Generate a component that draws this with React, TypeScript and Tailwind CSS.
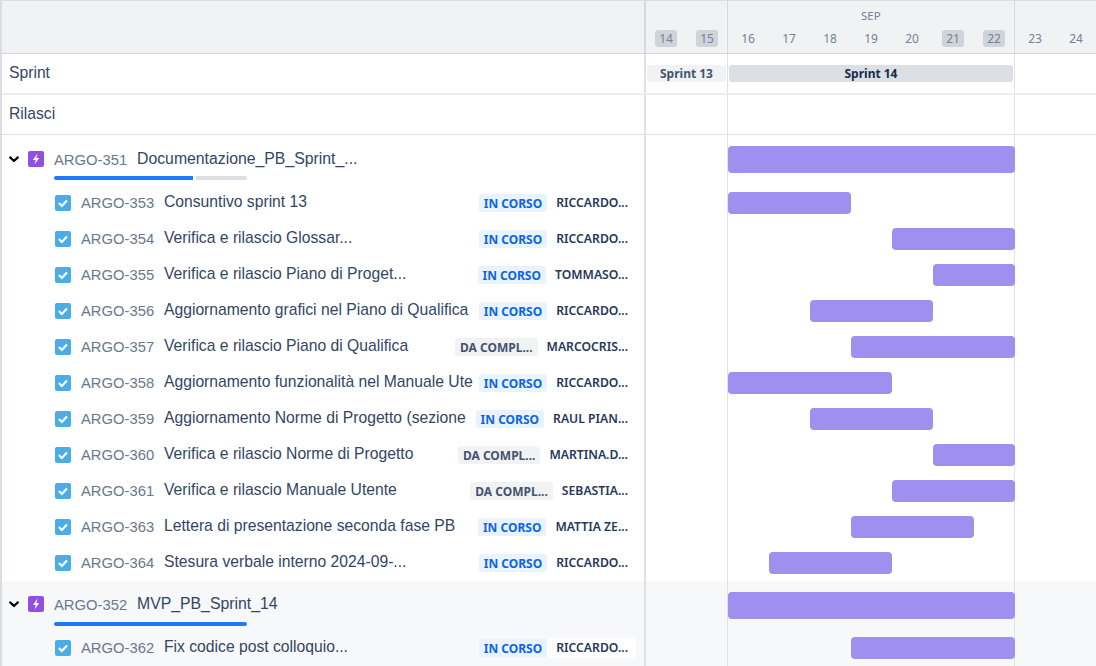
const DAYS = [
  { n: 14, off: true },
  { n: 15, off: true },
  { n: 16 },
  { n: 17 },
  { n: 18 },
  { n: 19 },
  { n: 20 },
  { n: 21, off: true },
  { n: 22, off: true },
  { n: 23 },
  { n: 24 },
];

const DAY_WIDTH = 41;

interface Issue {
  id: string;
  name: string;
  status: "IN CORSO" | "DA COMPL...";
  user: string;
  start: number;
  days: number;
}

const ISSUES: Issue[] = [
  { id: "ARGO-353", name: "Consuntivo sprint 13", status: "IN CORSO", user: "RICCARDO...", start: 0, days: 3 },
  { id: "ARGO-354", name: "Verifica e rilascio Glossar...", status: "IN CORSO", user: "RICCARDO...", start: 4, days: 3 },
  { id: "ARGO-355", name: "Verifica e rilascio Piano di Proget...", status: "IN CORSO", user: "TOMMASO...", start: 5, days: 2 },
  { id: "ARGO-356", name: "Aggiornamento grafici nel Piano di Qualifica", status: "IN CORSO", user: "RICCARDO...", start: 2, days: 3 },
  { id: "ARGO-357", name: "Verifica e rilascio Piano di Qualifica", status: "DA COMPL...", user: "MARCOCRIS...", start: 3, days: 4 },
  { id: "ARGO-358", name: "Aggiornamento funzionalità nel Manuale Ute", status: "IN CORSO", user: "RICCARDO...", start: 0, days: 4 },
  { id: "ARGO-359", name: "Aggiornamento Norme di Progetto (sezione", status: "IN CORSO", user: "RAUL PIAN...", start: 2, days: 3 },
  { id: "ARGO-360", name: "Verifica e rilascio Norme di Progetto", status: "DA COMPL...", user: "MARTINA.D...", start: 5, days: 2 },
  { id: "ARGO-361", name: "Verifica e rilascio Manuale Utente", status: "DA COMPL...", user: "SEBASTIA...", start: 4, days: 3 },
  { id: "ARGO-363", name: "Lettera di presentazione seconda fase PB", status: "IN CORSO", user: "MATTIA ZE...", start: 3, days: 3 },
  { id: "ARGO-364", name: "Stesura verbale interno 2024-09-...", status: "IN CORSO", user: "RICCARDO...", start: 1, days: 3 },
];

function EpicIcon() {
  return (
    <svg width="16" height="16" viewBox="0 0 16 16" className="shrink-0">
      <rect width="16" height="16" rx="2" fill="#904EE2" />
      <path d="M9.6 2.6 4.9 9h2.8l-1.1 4.4L11.3 7H8.5z" fill="#fff" />
    </svg>
  );
}

function TaskIcon() {
  return (
    <svg width="16" height="16" viewBox="0 0 16 16" className="mb-[1px] shrink-0">
      <rect width="16" height="16" rx="2" fill="#4BADE8" />
      <path d="M3.9 8.1 6.8 10.9 12 5.6" fill="none" stroke="#fff" strokeWidth="2.1" />
    </svg>
  );
}

function Chevron() {
  return (
    <svg width="10" height="7" viewBox="0 0 10 7" className="shrink-0">
      <path d="M1.2 1.4 5 5l3.8-3.6" fill="none" stroke="#000" strokeWidth="2.2" strokeLinecap="round" strokeLinejoin="round" />
    </svg>
  );
}

function Bar({ start, days, tall }: { start: number; days: number; tall?: boolean }) {
  return (
    <div
      className={`relative z-10 shrink-0 rounded-[4px] bg-[#9F8FEF] ${tall ? "h-[27px]" : "h-[22px]"}`}
      style={{ marginLeft: start * DAY_WIDTH, width: days * DAY_WIDTH }}
    />
  );
}

// right side of each row, week lines come from the cell borders
function Track({ children, className = "items-center" }: { children?: React.ReactNode; className?: string }) {
  return (
    <div className="flex h-full flex-1 border-l-2 border-[#DFE1E6]">
      <div className="h-full w-[82px] shrink-0 border-r border-[#DFE1E6]" />
      <div className={`flex h-full w-[286px] shrink-0 ${className}`}>{children}</div>
      <div className="h-full flex-1 border-l border-[#DFE1E6]" />
    </div>
  );
}

function EpicRow({ id, name, done, height, padClass }: { id: string; name: string; done?: number; height: string; padClass: string }) {
  return (
    <div className={`flex ${height}`}>
      <div className={`relative flex w-[642px] shrink-0 items-start pl-[7px] ${padClass}`}>
        <div className="flex items-center">
          <div className="mt-px"><Chevron /></div>
          <div className="ml-[9px]"><EpicIcon /></div>
          <span className="ml-[10px] mt-[2px] w-[83px] text-[14.8px] leading-5 text-[#6B778C]">{id}</span>
          <span className="text-[15.8px] leading-5 text-[#344563]">{name}</span>
        </div>
        <div className="absolute left-[52px] top-[41px] flex h-[4px] w-[193px] gap-[3px]">
          {done ? (
            <>
              <div className="h-full rounded-l-full bg-[#1D7AFC]" style={{ width: done }} />
              <div className="h-full flex-1 rounded-r-full bg-[#DCDFE4]" />
            </>
          ) : (
            <div className="h-full w-full rounded-full bg-[#1D7AFC]" />
          )}
        </div>
      </div>
      <Track className="items-start pt-[11px]">
        <Bar start={0} days={7} tall />
      </Track>
    </div>
  );
}

function IssueRow({ issue }: { issue: Issue }) {
  const isProgress = issue.status === "IN CORSO";
  return (
    <div className="flex h-[36px]">
      <div className="flex w-[642px] shrink-0 items-center pl-[53px] pr-[8px]">
        <TaskIcon />
        <span className="ml-[10px] w-[83px] shrink-0 pt-[1px] text-[14.8px] text-[#6B778C]">{issue.id}</span>
        <span className="mb-[3px] min-w-0 flex-1 overflow-hidden whitespace-nowrap text-[15.7px] text-[#344563]">
          {issue.name}
        </span>
        <span
          className={`ml-[4px] flex h-[18px] shrink-0 items-center rounded-[3px] px-[5px] pt-[1px] font-['Noto_Sans',sans-serif] text-[12px] font-bold ${
            isProgress ? "bg-[#E9F2FF] text-[#0C66E4]" : "bg-[#F1F2F4] text-[#44546F]"
          }`}
        >
          {issue.status}
        </span>
        <span className="flex h-[20px] shrink-0 items-center rounded-[3px] bg-white pl-[9px] pr-[8px] pt-[1px] font-['Noto_Sans',sans-serif] text-[12.2px] font-semibold text-[#253858]">
          {issue.user}
        </span>
      </div>
      <Track>
        <Bar start={issue.start} days={issue.days} />
      </Track>
    </div>
  );
}

export default function App() {
  return (
    <div className="h-[666px] w-[1096px] overflow-hidden border-l-2 border-t border-[#DADDE4] bg-white font-['Liberation_Sans',sans-serif]">
      <div className="flex h-[53px] border-b border-[#CFD4DD] bg-[#F1F2F4]">
        <div className="w-[642px] shrink-0" />
        <div className="flex flex-1 border-l-2 border-[#D5D8DF]">
          <div className="flex w-[82px] shrink-0 items-end gap-[19px] border-r border-[#D5D8DF] pb-[6px] pl-[9px]">
            {DAYS.slice(0, 2).map((d) => <Day key={d.n} n={d.n} off />)}
          </div>
          <div className="relative flex w-[286px] shrink-0 items-end gap-[19px] pb-[6px] pl-[9px]">
            <span className="absolute left-[133px] top-[6px] font-['Noto_Sans',sans-serif] text-[11.5px] text-[#758195]">SEP</span>
            {DAYS.slice(2, 9).map((d) => <Day key={d.n} n={d.n} off={d.off} />)}
          </div>
          <div className="flex flex-1 items-end gap-[19px] border-l border-[#D5D8DF] pb-[6px] pl-[9px]">
            {DAYS.slice(9).map((d) => <Day key={d.n} n={d.n} />)}
          </div>
        </div>
      </div>

      <div className="flex h-[41px] border-b-2 border-[#EDEEF0]">
        <div className="flex w-[642px] shrink-0 items-center pb-[1px] pl-[7px] text-[15.7px] text-[#344563]">Sprint</div>
        <div className="flex flex-1 border-l-2 border-[#DFE1E6]">
          <div className="flex w-[82px] shrink-0 border-r border-[#DFE1E6] p-[1px] py-[11px]">
            <div className="flex flex-1 items-center justify-center rounded-[3px] bg-[#F1F2F4] font-['Noto_Sans',sans-serif] text-[12px] font-bold text-[#44546F]">Sprint 13</div>
          </div>
          <div className="flex w-[286px] shrink-0 py-[11px] pl-[1px] pr-[1px]">
            <div className="flex flex-1 items-center justify-center rounded-[3px] bg-[#DCDFE4] font-['Noto_Sans',sans-serif] text-[12px] font-bold text-[#172B4D]">Sprint 14</div>
          </div>
          <div className="flex-1 border-l border-[#DFE1E6]" />
        </div>
      </div>

      <div className="flex h-[40px] border-b border-[#DFE1E6]">
        <div className="flex w-[642px] shrink-0 items-center pb-[2px] pl-[7px] text-[15.7px] text-[#344563]">Rilasci</div>
        <Track />
      </div>

      <EpicRow id="ARGO-351" name="Documentazione_PB_Sprint_..." done={139} height="h-[50px]" padClass="pt-[13px]" />
      {ISSUES.map((issue) => <IssueRow key={issue.id} issue={issue} />)}

      <div className="bg-[#F7F8F9]">
        <EpicRow id="ARGO-352" name="MVP_PB_Sprint_14" height="h-[49px]" padClass="pt-[12px]" />
        <IssueRow
          issue={{ id: "ARGO-362", name: "Fix codice post colloquio...", status: "IN CORSO", user: "RICCARDO...", start: 3, days: 4 }}
        />
      </div>
    </div>
  );
}

function Day({ n, off }: { n: number; off?: boolean }) {
  return (
    <span
      className={`flex h-[17px] w-[22px] shrink-0 items-center justify-center rounded-[3px] font-['Noto_Sans',sans-serif] text-[12px] text-[#758195] ${
        off ? "bg-[#CFD4DB]" : ""
      }`}
    >
      {n}
    </span>
  );
}
